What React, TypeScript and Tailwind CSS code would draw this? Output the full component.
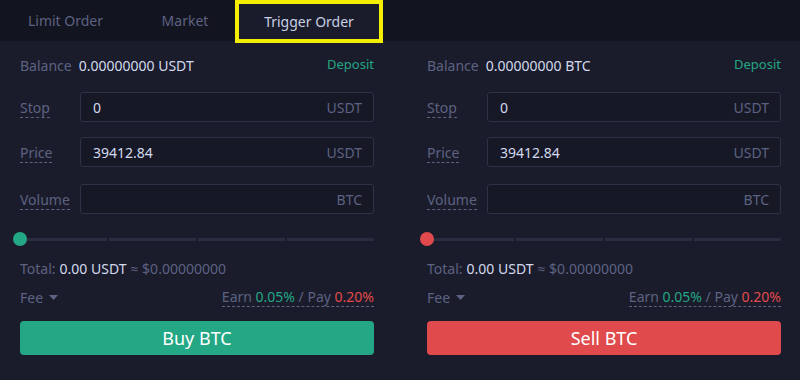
import React from 'react';

type Side = {
  action: string;
  color: string;
};

const Field: React.FC<{ label: string; value?: string; unit: string }> = ({ label, value, unit }) => (
  <div className="flex items-center h-[30px]">
    <span className="w-[60px] shrink-0">
      <span className="text-[#5d6282] border-b border-dashed border-[#5d6282] leading-[18px] inline-block">{label}</span>
    </span>
    <div className="flex-1 h-full flex items-center justify-between pl-[12px] pr-[11px] rounded-[3px] border border-[#2f3246] bg-[#161826]">
      <span className="text-[#d4d9ee]">{value}</span>
      <span className="text-[#5d6282]">{unit}</span>
    </div>
  </div>
);

const Slider: React.FC<{ color: string }> = ({ color }) => (
  <div className="relative h-[14px] flex items-center">
    <div className="flex-1 flex gap-[2px]">
      <div className="h-[3px] flex-1 bg-[#2a2d40]" />
      <div className="h-[3px] flex-1 bg-[#2a2d40]" />
      <div className="h-[3px] flex-1 bg-[#2a2d40]" />
      <div className="h-[3px] flex-1 bg-[#2a2d40] rounded-r" />
    </div>
    <div className={`absolute -left-[7px] top-0 w-[14px] h-[14px] rounded-full ${color}`} />
  </div>
);

const Panel: React.FC<{ side: Side; balance: string }> = ({ side, balance }) => (
  <div className="flex-1 flex flex-col">
    <div className="flex items-center justify-between h-[20px] mt-[14px]">
      <div>
        <span className="text-[#5d6282]">Balance</span>
        <span className="text-[#d4d9ee] ml-[7px]">{balance}</span>
      </div>
      <span className="text-[#23a784] text-[13px]">Deposit</span>
    </div>
    <div className="mt-[17px] flex flex-col gap-[15px]">
      <Field label="Stop" value="0" unit="USDT" />
      <Field label="Price" value="39412.84" unit="USDT" />
      <div className="mt-[2px]">
        <Field label="Volume" unit="BTC" />
      </div>
    </div>
    <div className="mt-[18px]">
      <Slider color={side.color} />
    </div>
    <div className="mt-[12px] h-[20px] flex items-center text-[#5d6282]">
      Total:<span className="text-[#d4d9ee] ml-[4px]">0.00 USDT</span>
      <span className="ml-[4px]">≈ $0.00000000</span>
    </div>
    <div className="mt-[9px] h-[20px] flex items-center justify-between">
      <span className="text-[#5d6282] flex items-center">
        Fee
        <svg className="ml-[6px]" width="9" height="5" viewBox="0 0 9 5">
          <path d="M0 0 L9 0 L4.5 5 Z" fill="#5d6282" />
        </svg>
      </span>
      <span className="border-b border-dashed border-[#5d6282] leading-[18px]">
        <span className="text-[#5d6282]">Earn </span>
        <span className="text-[#23a784]">0.05%</span>
        <span className="text-[#5d6282]"> / Pay </span>
        <span className="text-[#e04a4c]">0.20%</span>
      </span>
    </div>
    <button className={`mt-[14px] h-[34px] rounded-[4px] text-white text-[18px] ${side.color}`}>
      {side.action}
    </button>
  </div>
);

export default function App() {
  return (
    <div
      className="w-[800px] h-[380px] bg-[#1a1c2b] text-[14px] overflow-hidden"
      style={{ fontFamily: '"Noto Sans", "Open Sans", sans-serif' }}
    >
      <div className="h-[41px] bg-[#12141f] flex items-stretch">
        <div className="w-[131px] flex items-center justify-center text-[#5d6282]">Limit Order</div>
        <div className="w-[104px] flex items-center justify-center text-[#5d6282] pl-[4px]">Market</div>
        <div className="w-[148px] h-[43px] flex items-center justify-center text-[#c9cfe6] bg-[#1a1c2b] border-[4px] border-[#f5ee00]">
          Trigger Order
        </div>
      </div>
      <div className="flex gap-[53px] pl-[20px] pr-[19px]">
        <Panel side={{ action: 'Buy BTC', color: 'bg-[#23a784]' }} balance="0.00000000 USDT" />
        <Panel side={{ action: 'Sell BTC', color: 'bg-[#e04a4c]' }} balance="0.00000000 BTC" />
      </div>
    </div>
  );
}
